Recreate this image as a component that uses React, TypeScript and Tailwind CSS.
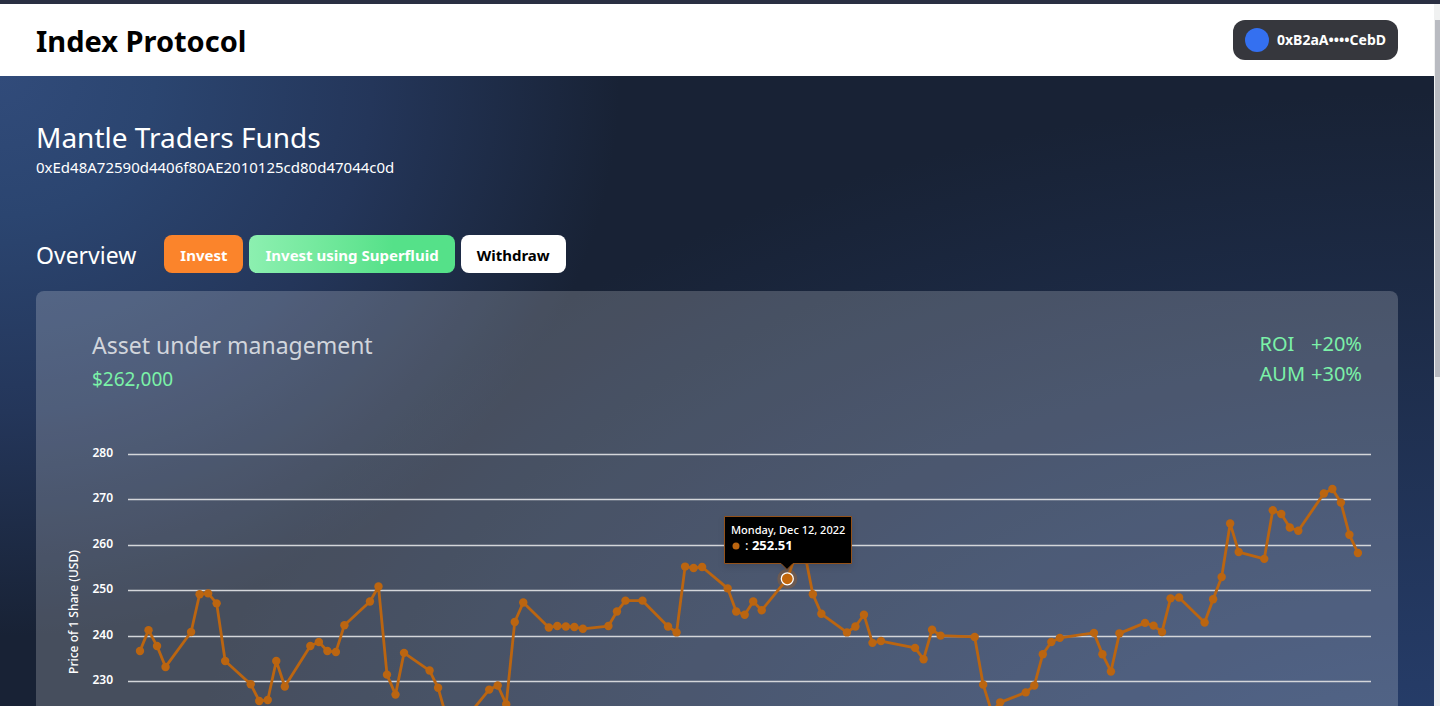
import { useState } from "react";

// [day, price per share]
const prices: [number, number][] = [
  [0, 236.6], [1, 241.2], [2, 237.7], [3, 233.1], [6, 240.8], [7, 249.1],
  [8, 249.3], [9, 247.1], [10, 234.4], [13, 229.3], [14, 225.6], [15, 225.8],
  [16, 234.4], [17, 228.8], [20, 237.7], [21, 238.6], [22, 236.6], [23, 236.4],
  [24, 242.3], [27, 247.5], [28, 250.8], [29, 231.4], [30, 227.0], [31, 236.2],
  [34, 232.3], [35, 228.5], [36, 221.9], [37, 221.0], [38, 221.2], [41, 228.1],
  [42, 229.0], [43, 224.9], [44, 243.0], [45, 247.3], [48, 241.8], [49, 242.1],
  [50, 242.0], [51, 241.9], [52, 241.5], [55, 242.1], [56, 245.3], [57, 247.7],
  [59, 247.7], [62, 242.0], [63, 240.7], [64, 255.2], [65, 254.9], [66, 255.1],
  [69, 250.4], [70, 245.3], [71, 244.6], [72, 247.5], [73, 245.6], [76, 252.51],
  [77, 257.8], [78, 258.6], [79, 249.1], [80, 244.8], [83, 240.7], [84, 242.0],
  [85, 244.6], [86, 238.4], [87, 238.8], [91, 237.3], [92, 234.8], [93, 241.3],
  [94, 240.0], [98, 239.7], [99, 229.2], [100, 223.2], [101, 225.3],
  [104, 227.5], [105, 229.0], [106, 235.9], [107, 238.6], [108, 239.5],
  [112, 240.6], [113, 235.9], [114, 232.1], [115, 240.5], [118, 242.8],
  [119, 242.2], [120, 240.8], [121, 248.2], [122, 248.4], [125, 242.9],
  [126, 248.0], [127, 252.9], [128, 264.7], [129, 258.4], [132, 256.9],
  [133, 267.6], [134, 266.8], [135, 263.8], [136, 263.1], [139, 271.3],
  [140, 272.3], [141, 269.3], [142, 262.2], [143, 258.2],
];

const ticks = [280, 270, 260, 250, 240, 230];

const toX = (day: number) => 104 + day * 8.517;
const toY = (price: number) => 33 + (280 - price) * 4.54;

function PriceChart() {
  const [active, setActive] = useState(76);
  const point = prices.find(([day]) => day === active) ?? prices[0];
  const x = toX(point[0]);
  const y = toY(point[1]);

  const date = new Date(Date.UTC(2022, 8, 27 + active));
  const label = date.toLocaleDateString("en-US", {
    weekday: "long",
    month: "short",
    day: "2-digit",
    year: "numeric",
    timeZone: "UTC",
  });

  return (
    <svg viewBox="0 0 1362 380" className="block w-full">
      {/* Grid */}
      {ticks.map((tick) => (
        <g key={tick}>
          <line
            x1="92"
            x2="1335"
            y1={Math.round(toY(tick)) + 0.5}
            y2={Math.round(toY(tick)) + 0.5}
            className="stroke-[#d4d6da]"
            strokeWidth="1.3"
          />
          <text
            x="77"
            y={Math.round(toY(tick)) + 3}
            textAnchor="end"
            className="fill-white text-[12px] font-semibold"
          >
            {tick}
          </text>
        </g>
      ))}
      <text
        transform="translate(42 191) rotate(-90)"
        textAnchor="middle"
        className="fill-white text-[12px] font-medium"
      >
        Price of 1 Share (USD)
      </text>

      {/* Series */}
      <polyline
        points={prices.map(([d, p]) => `${toX(d)},${toY(p)}`).join(" ")}
        fill="none"
        stroke="#bb6510"
        strokeWidth="2.8"
        strokeLinejoin="round"
      />
      {prices.map(([d, p]) => (
        <circle
          key={d}
          cx={toX(d)}
          cy={toY(p)}
          r="4.2"
          fill="#bb6510"
          onMouseEnter={() => setActive(d)}
        />
      ))}

      {/* Tooltip */}
      <circle cx={x} cy={y} r="10" fill="#bb6510" opacity="0.3" />
      <circle cx={x} cy={y} r="6" fill="#c4670c" stroke="#fff" strokeWidth="1.3" />
      <g transform={`translate(${Math.round(x) - 63} ${Math.round(y) - 63})`}>
        <path
          d="M.5.5h127v47H69l-6 6-6-6H.5z"
          fill="#000"
          stroke="#94521a"
          className="drop-shadow-md"
        />
        <text x="7" y="18" className="fill-white text-[11px] font-medium">
          {label}
        </text>
        <circle cx="12" cy="30" r="3.5" fill="#bb6510" />
        <text x="21" y="34" className="fill-white text-[13px]">
          : <tspan className="font-bold">{point[1].toFixed(2)}</tspan>
        </text>
      </g>
    </svg>
  );
}

function Header() {
  return (
    <header className="flex h-18 shrink-0 items-center justify-between bg-white px-9">
      <h1 className="pt-0.5 text-[29px] font-bold text-black">Index Protocol</h1>
      <button className="flex h-10 items-center gap-2 rounded-xl bg-[#36373d] px-3 text-sm font-bold text-white">
        <span className="size-6 rounded-full bg-[#3470f0]" />
        0xB2aA••••CebD
      </button>
    </header>
  );
}

export default function App() {
  return (
    <div className="flex h-screen flex-col overflow-hidden bg-white font-['Noto_Sans',sans-serif]">
      <div className="h-1 shrink-0 bg-[#2a2f42]" />
      <div className="flex min-h-0 flex-1">
        <div className="flex min-w-0 flex-1 flex-col overflow-hidden">
          <Header />
          <main className="min-h-0 flex-1 overflow-hidden bg-[#182235] bg-[radial-gradient(620px_560px_at_0_0,#314b7a,#2b4570_25%,#24365a_60%,transparent),radial-gradient(1250px_740px_at_100%_120%,#284270,#253b66_20%,transparent)] px-9 pt-[43px] text-white">
            <h2 className="text-[28px] leading-9">Mantle Traders Funds</h2>
            <p className="text-[15px] leading-6">
              0xEd48A72590d4406f80AE2010125cd80d47044c0d
            </p>

            <div className="mt-14 flex items-center gap-7">
              <h3 className="pt-0.5 text-[23px] leading-8">Overview</h3>
              <div className="flex gap-1.5 text-[15px] leading-6 font-bold">
                <button className="rounded-lg bg-[#fb842b] px-4 pt-2 pb-1.5">
                  Invest
                </button>
                <button className="rounded-lg bg-linear-to-r from-[#8cf0b0] to-[#55e189] to-70% px-4 pt-2 pb-1.5">
                  Invest using Superfluid
                </button>
                <button className="rounded-lg bg-white px-4 pt-2 pb-1.5 text-black">
                  Withdraw
                </button>
              </div>
            </div>

            <section className="mt-4.5 rounded-lg bg-white/20">
              <div className="flex items-start justify-between px-9 pt-[38px]">
                <div className="pl-5">
                  <h4 className="text-[23px] leading-8 text-gray-300">
                    Asset under management
                  </h4>
                  <p className="text-[19px] leading-9 text-green-300">
                    $262,000
                  </p>
                </div>
                <dl className="grid grid-cols-[auto_auto] gap-x-1.5 text-xl leading-[30px] text-green-300">
                  <dt>ROI</dt>
                  <dd>+20%</dd>
                  <dt>AUM</dt>
                  <dd>+30%</dd>
                </dl>
              </div>
              <div className="mt-6">
                <PriceChart />
              </div>
            </section>
          </main>
        </div>

        {/* Scrollbar */}
        <div className="w-1.5 shrink-0 bg-[#f0f1f1] pt-4 pl-px">
          <div className="h-[52%] bg-[#b9bbc1]" />
        </div>
      </div>
    </div>
  );
}
